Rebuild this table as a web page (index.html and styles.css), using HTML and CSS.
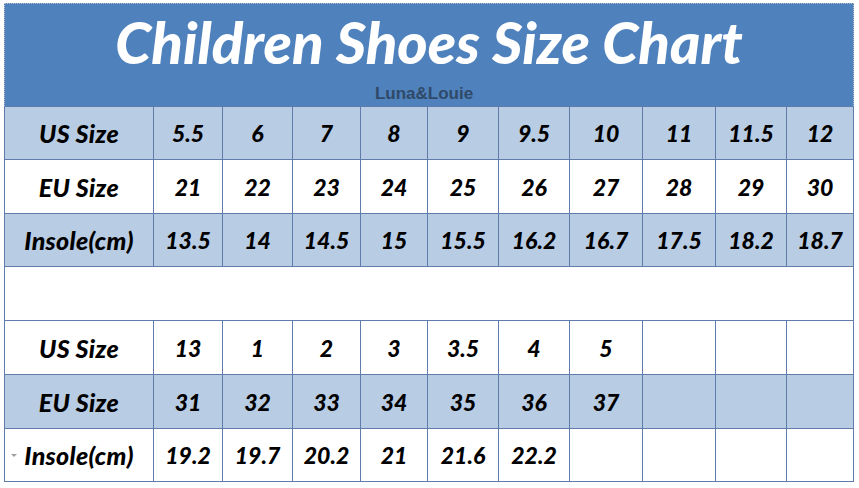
FILE: index.html
```html
<!DOCTYPE html>
<html>
<head>
<meta charset="utf-8">
<link rel="stylesheet" href="styles.css">
</head>
<body>
<div class="chart">
  <div class="header">
    <h1 class="title">Children Shoes Size Chart</h1>
    <div class="brand">Luna&amp;Louie</div>
  </div>
  <div class="grid">
    <div class="c blue label">US Size</div>
    <div class="c blue">5.5</div><div class="c blue">6</div><div class="c blue">7</div><div class="c blue">8</div><div class="c blue">9</div><div class="c blue">9.5</div><div class="c blue">10</div><div class="c blue">11</div><div class="c blue">11.5</div><div class="c blue">12</div>

    <div class="c label">EU Size</div>
    <div class="c">21</div><div class="c">22</div><div class="c">23</div><div class="c">24</div><div class="c">25</div><div class="c">26</div><div class="c">27</div><div class="c">28</div><div class="c">29</div><div class="c">30</div>

    <div class="c blue label">Insole(cm)</div>
    <div class="c blue">13.5</div><div class="c blue">14</div><div class="c blue">14.5</div><div class="c blue">15</div><div class="c blue">15.5</div><div class="c blue">16.2</div><div class="c blue">16.7</div><div class="c blue">17.5</div><div class="c blue">18.2</div><div class="c blue">18.7</div>

    <div class="c spacer"></div>

    <div class="c label">US Size</div>
    <div class="c">13</div><div class="c">1</div><div class="c">2</div><div class="c">3</div><div class="c">3.5</div><div class="c">4</div><div class="c">5</div><div class="c"></div><div class="c"></div><div class="c"></div>

    <div class="c blue label">EU Size</div>
    <div class="c blue">31</div><div class="c blue">32</div><div class="c blue">33</div><div class="c blue">34</div><div class="c blue">35</div><div class="c blue">36</div><div class="c blue">37</div><div class="c blue"></div><div class="c blue"></div><div class="c blue"></div>

    <div class="c label marked"><span class="dropmark"></span>Insole(cm)</div>
    <div class="c">19.2</div><div class="c">19.7</div><div class="c">20.2</div><div class="c">21</div><div class="c">21.6</div><div class="c">22.2</div><div class="c"></div><div class="c"></div><div class="c"></div><div class="c"></div>
  </div>
</div>
</body>
</html>
```

FILE: styles.css
```css
html, body {
  margin: 0;
  padding: 0;
  background: #ffffff;
}

.chart {
  width: 850px;
  margin: 3px 0 0 4px;
}

.header {
  height: 102px;
  background: #4f81bd;
  border-top: 1px dotted #b9bfc8;
  border-left: 1px dotted #b9bfc8;
  border-right: 1px dotted #b9bfc8;
  box-sizing: content-box;
  width: 848px;
  display: flex;
  flex-direction: column;
  align-items: center;
}

.title {
  margin: 4px 0 0 0;
  font-family: Lato, "Open Sans", sans-serif;
  font-weight: 900;
  font-style: italic;
  font-size: 58px;
  line-height: 68px;
  color: #ffffff;
}

.brand {
  margin-top: 8px;
  margin-right: 10px;
  font-family: "Liberation Sans", Arial, sans-serif;
  font-weight: 700;
  font-size: 17px;
  line-height: 20px;
  color: #2f4a68;
}

.grid {
  display: grid;
  grid-template-columns: 148px 68px 69px 67px 66px 70px 70px 72px 72px 70px 66px;
  grid-template-rows: 52px 53px 52px 53px 53px 53px 52px;
  gap: 1px;
  padding: 1px;
  background: #5f7cab;
  width: 848px;
}

.c {
  background: #ffffff;
  display: flex;
  align-items: center;
  justify-content: center;
  font-family: Lato, "Open Sans", sans-serif;
  font-weight: 900;
  font-style: italic;
  font-size: 23px;
  color: #000000;
}

.c.label {
  font-size: 25px;
  letter-spacing: 0.3px;
}

.c.blue {
  background: #b8cce4;
}

.spacer {
  grid-column: 1 / -1;
}

.marked {
  position: relative;
}

.dropmark {
  position: absolute;
  left: 6px;
  top: 25px;
  width: 0;
  height: 0;
  border-left: 3px solid transparent;
  border-right: 3px solid transparent;
  border-top: 3px solid #a0a0a0;
}
```
